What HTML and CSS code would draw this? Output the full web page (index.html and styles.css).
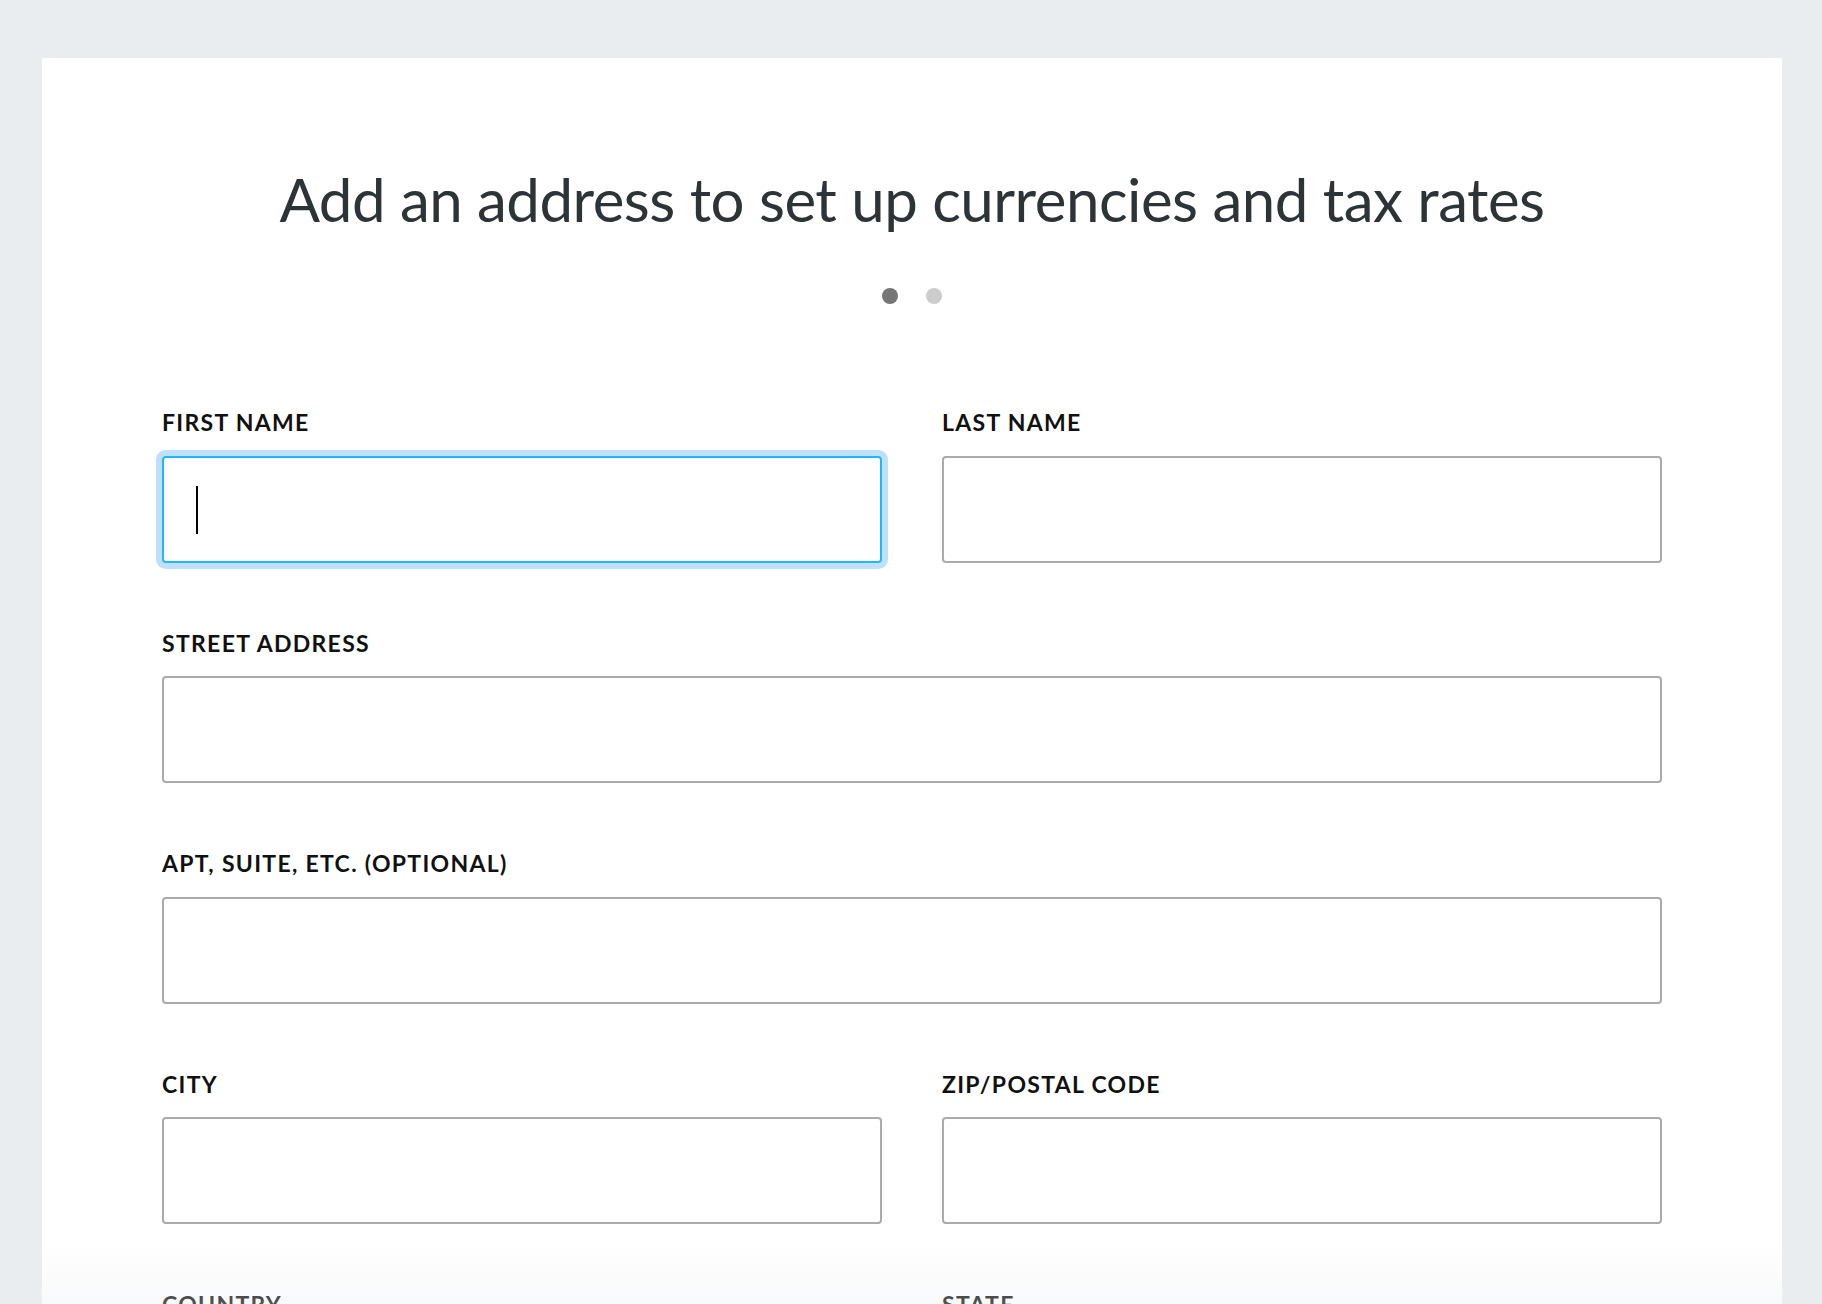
FILE: index.html
```html
<!DOCTYPE html>
<html>
<head>
    <title>Add an address</title>
    <meta name="viewport" content="width=device-width, initial-scale=1.0">
    <link rel="stylesheet" href="styles.css">
</head>
<body>
    <div class="card">
        <h1 class="title">Add an address to set up currencies and tax rates</h1>

        <div class="steps">
            <span class="step active"></span>
            <span class="step"></span>
        </div>

        <form class="address-form">
            <div class="field">
                <label for="first-name">First name</label>
                <div class="control">
                    <input class="input focused" id="first-name" type="text">
                    <span class="caret"></span>
                </div>
            </div>
            <div class="field">
                <label for="last-name">Last name</label>
                <input class="input" id="last-name" type="text">
            </div>
            <div class="field wide">
                <label for="street">Street address</label>
                <input class="input" id="street" type="text">
            </div>
            <div class="field wide">
                <label for="apt">Apt, suite, etc. (optional)</label>
                <input class="input" id="apt" type="text">
            </div>
            <div class="field">
                <label for="city">City</label>
                <input class="input" id="city" type="text">
            </div>
            <div class="field">
                <label for="zip">Zip/postal code</label>
                <input class="input" id="zip" type="text">
            </div>
            <div class="field">
                <label for="country">Country</label>
                <input class="input" id="country" type="text">
            </div>
            <div class="field">
                <label for="state">State</label>
                <input class="input" id="state" type="text">
            </div>
        </form>
    </div>

    <div class="bottom-fade"></div>
</body>
</html>
```

FILE: styles.css
```css
body {
    font-family: Lato, "Open Sans", Arial, sans-serif;
    background-color: #e9edf0;
    color: #111111;
    margin: 0;
    padding: 58px 40px 0 42px;
}
.card {
    background-color: #ffffff;
    padding: 105px 120px 200px;
}
.title {
    margin: 0;
    font-size: 60px;
    font-weight: 400;
    line-height: 1.2;
    letter-spacing: -0.5px;
    text-align: center;
    color: #2d3437;
}
.steps {
    display: flex;
    justify-content: center;
    gap: 28px;
    margin-top: 53px;
}
.step {
    width: 16px;
    height: 16px;
    border-radius: 50%;
    background-color: #cccccc;
}
.step.active {
    background-color: #767676;
}
.address-form {
    display: grid;
    grid-template-columns: 1fr 1fr;
    column-gap: 60px;
    row-gap: 65px;
    margin-top: 103px;
}
.field.wide {
    grid-column: span 2;
}
.field label {
    display: block;
    font-size: 23px;
    font-weight: 700;
    line-height: 1.2;
    letter-spacing: 1.3px;
    text-transform: uppercase;
    color: #111111;
    padding-top: 2px;
    margin-bottom: 19px;
}
.control {
    position: relative;
}
.input {
    display: block;
    width: 100%;
    height: 107px;
    box-sizing: border-box;
    border: 2px solid #aaaaaa;
    border-radius: 4px;
    padding: 0 33px;
    font-family: inherit;
    font-size: 24px;
    background-color: #ffffff;
    outline: none;
}
.input.focused {
    border-color: #1fb9f8;
    box-shadow: 0 0 0 6px #bfe0fb;
}
.caret {
    position: absolute;
    left: 34px;
    top: 30px;
    width: 2px;
    height: 48px;
    background-color: #000000;
}
.bottom-fade {
    position: fixed;
    left: 42px;
    right: 40px;
    bottom: 0;
    height: 60px;
    background: linear-gradient(to bottom, rgba(232, 235, 238, 0), rgba(232, 235, 238, 0.3));
    pointer-events: none;
}
```
